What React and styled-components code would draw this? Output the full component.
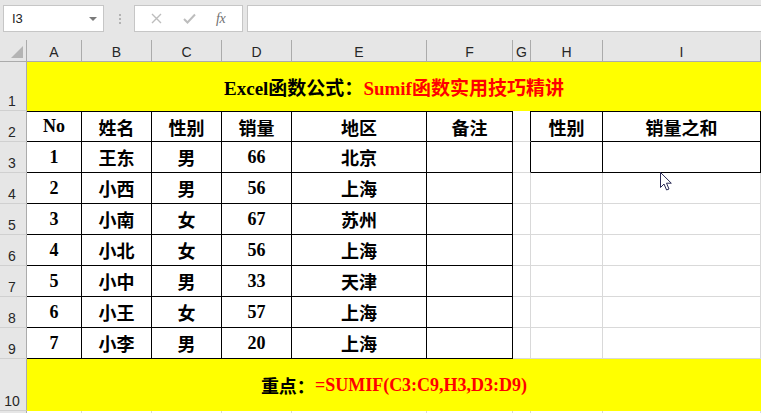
import styled, { createGlobalStyle } from "styled-components";

const GRID = "#d9d9d9";
const INK = "#000";

const GlobalStyle = createGlobalStyle`
  html, body {
    margin: 0;
    padding: 0;
    background: #fff;
    overflow: hidden;
  }
`;

const cols = ["A", "B", "C", "D", "E", "F", "G", "H", "I"];
const head = ["No", "姓名", "性别", "销量", "地区", "备注"];
const rows = [
  ["1", "王东", "男", "66", "北京"],
  ["2", "小西", "男", "56", "上海"],
  ["3", "小南", "女", "67", "苏州"],
  ["4", "小北", "女", "56", "上海"],
  ["5", "小中", "男", "33", "天津"],
  ["6", "小王", "女", "57", "上海"],
  ["7", "小李", "男", "20", "上海"],
];

const Page = styled.div`
  position: relative;
  width: 761px;
  height: 413px;
  overflow: hidden;
  font-family: "Liberation Sans", Arial, sans-serif;
`;

const Toolbar = styled.div`
  display: flex;
  align-items: flex-start;
  height: 40px;
  box-sizing: border-box;
  padding: 5px 0 0 3px;
  background: #e6e6e6;
`;

const NameBox = styled.div`
  display: flex;
  align-items: center;
  justify-content: space-between;
  width: 101px;
  height: 27px;
  box-sizing: border-box;
  padding: 0 6px 0 8px;
  background: #fff;
  border: 1px solid #c6c6c6;
  font-size: 13px;
  color: #222;
`;

const Caret = styled.span`
  width: 0;
  height: 0;
  border-left: 4px solid transparent;
  border-right: 4px solid transparent;
  border-top: 4px solid #7a7a7a;
`;

const Grip = styled.div`
  display: flex;
  flex-direction: column;
  gap: 2px;
  margin: 9px 13px 0 15px;
  span {
    width: 2px;
    height: 2px;
    background: #b3b3b3;
  }
`;

const ButtonGroup = styled.div`
  display: flex;
  align-items: center;
  width: 109px;
  height: 27px;
  box-sizing: border-box;
  padding: 0 0 0 12px;
  gap: 15px;
  background: #fff;
  border: 1px solid #c6c6c6;
`;

const IconSlot = styled.span`
  display: flex;
  width: 18px;
  justify-content: center;
`;

const Fx = styled.span`
  font-family: "Liberation Serif", serif;
  font-style: italic;
  font-size: 14px;
  color: #707070;
  margin-left: 3px;
  letter-spacing: -0.5px;
`;

const FormulaInput = styled.div`
  flex: 1;
  height: 27px;
  margin-left: 4px;
  box-sizing: border-box;
  background: #fff;
  border: 1px solid #c6c6c6;
  border-right: none;
`;

const Sheet = styled.div`
  display: grid;
  grid-template-columns: 27px 55px 70px 70px 70px 135px 86px 18px 72px 1fr;
  grid-template-rows: 22px 49px 31px repeat(7, 31px) 52px 31px;
`;

const Corner = styled.div`
  position: relative;
  background: #e6e6e6;
  border-right: 1px solid #ababab;
  border-bottom: 1px solid #ababab;
  &::after {
    content: "";
    position: absolute;
    right: 3px;
    bottom: 3px;
    width: 0;
    height: 0;
    border-left: 12px solid transparent;
    border-bottom: 12px solid #b4b4b4;
  }
`;

const ColHead = styled.div`
  display: flex;
  align-items: center;
  justify-content: center;
  padding-top: 3px;
  background: #e6e6e6;
  border-bottom: 1px solid #ababab;
  border-right: 1px solid #ababab;
  font-size: 14px;
  color: #262626;
`;

const RowHead = styled.div`
  display: flex;
  align-items: flex-end;
  justify-content: center;
  padding: 0 2px 1px 0;
  background: #e6e6e6;
  border-right: 1px solid #ababab;
  border-bottom: 1px solid #d0d0d0;
  font-size: 14px;
  color: #262626;
`;

const Cell = styled.div`
  display: flex;
  align-items: center;
  justify-content: center;
  background: #fff;
  border-right: 1px solid ${(p) => p.$r || GRID};
  border-bottom: 1px solid ${(p) => p.$b || GRID};
  border-top: ${(p) => (p.$t ? `1px solid ${p.$t}` : "none")};
  font-family: "Liberation Serif", "Noto Sans CJK SC", serif;
  font-weight: bold;
  font-size: 18px;
  color: #000;
`;

const Banner = styled.div`
  grid-column: 2 / -1;
  display: flex;
  align-items: center;
  justify-content: center;
  background: #ffff00;
  font-family: "Liberation Serif", "Noto Sans CJK SC", serif;
  font-weight: bold;
  font-size: ${(p) => p.$size || 19}px;
  color: #000;
`;

const Red = styled.span`
  color: #ff0000;
`;

const Cursor = styled.svg`
  position: absolute;
  left: 660px;
  top: 172px;
`;

function cellBorders(r, c) {
  // r: sheet row number, c: 0-based column index A..I
  const inTable = r >= 2 && r <= 9 && c <= 5;
  const inSide = r >= 2 && r <= 3 && (c === 7 || c === 8);
  const b = {};
  if (inTable || inSide) {
    b.$r = INK;
    b.$b = INK;
    if (r === 2) b.$t = INK;
  }
  if (c === 6 && (r === 2 || r === 3)) b.$r = INK;
  return b;
}

function rowValues(r) {
  if (r === 2) return [...head, "", "性别", "销量之和"];
  if (r >= 3 && r <= 9) return [...rows[r - 3], "", "", "", ""];
  return ["", "", "", "", "", "", "", "", ""];
}

export default function App() {
  const body = [];
  for (let r = 1; r <= 11; r++) {
    // row 11 is only a sliver at the window bottom, its number is out of view
    body.push(<RowHead key={`h${r}`}>{r < 11 ? r : ""}</RowHead>);
    if (r === 1) {
      body.push(
        <Banner key="b1">
          Excel函数公式：<Red>Sumif函数实用技巧精讲</Red>
        </Banner>
      );
      continue;
    }
    if (r === 10) {
      body.push(
        <Banner key="b10" $size={18}>
          重点：<Red>=SUMIF(C3:C9,H3,D3:D9)</Red>
        </Banner>
      );
      continue;
    }
    const vals = rowValues(r);
    cols.forEach((_, c) => {
      body.push(
        <Cell key={`${r}-${c}`} {...cellBorders(r, c)}>
          {vals[c]}
        </Cell>
      );
    });
  }

  return (
    <Page>
      <GlobalStyle />
      <Toolbar>
        <NameBox>
          <span>I3</span>
          <Caret />
        </NameBox>
        <Grip>
          <span />
          <span />
          <span />
        </Grip>
        <ButtonGroup>
          <IconSlot>
            <svg width="11" height="11" viewBox="0 0 11 11">
              <path d="M1 1 L10 10 M10 1 L1 10" stroke="#bdbdbd" strokeWidth="1.4" fill="none" />
            </svg>
          </IconSlot>
          <IconSlot>
            <svg width="13" height="11" viewBox="0 0 13 11">
              <path d="M1 6 L4.5 9.5 L12 1.5" stroke="#bdbdbd" strokeWidth="2" fill="none" />
            </svg>
          </IconSlot>
          <Fx>fx</Fx>
        </ButtonGroup>
        <FormulaInput />
      </Toolbar>
      <Sheet>
        <Corner />
        {cols.map((c) => (
          <ColHead key={c}>{c}</ColHead>
        ))}
        {body}
      </Sheet>
      <Cursor width="13" height="20" viewBox="0 0 13 20">
        <path
          d="M0.5 0.5 L0.5 15.5 L4 12 L6.6 18 L9 17 L6.5 11.2 L11.3 11.2 Z"
          fill="#fff"
          stroke="#2a2a55"
          strokeWidth="1"
        />
      </Cursor>
    </Page>
  );
}
